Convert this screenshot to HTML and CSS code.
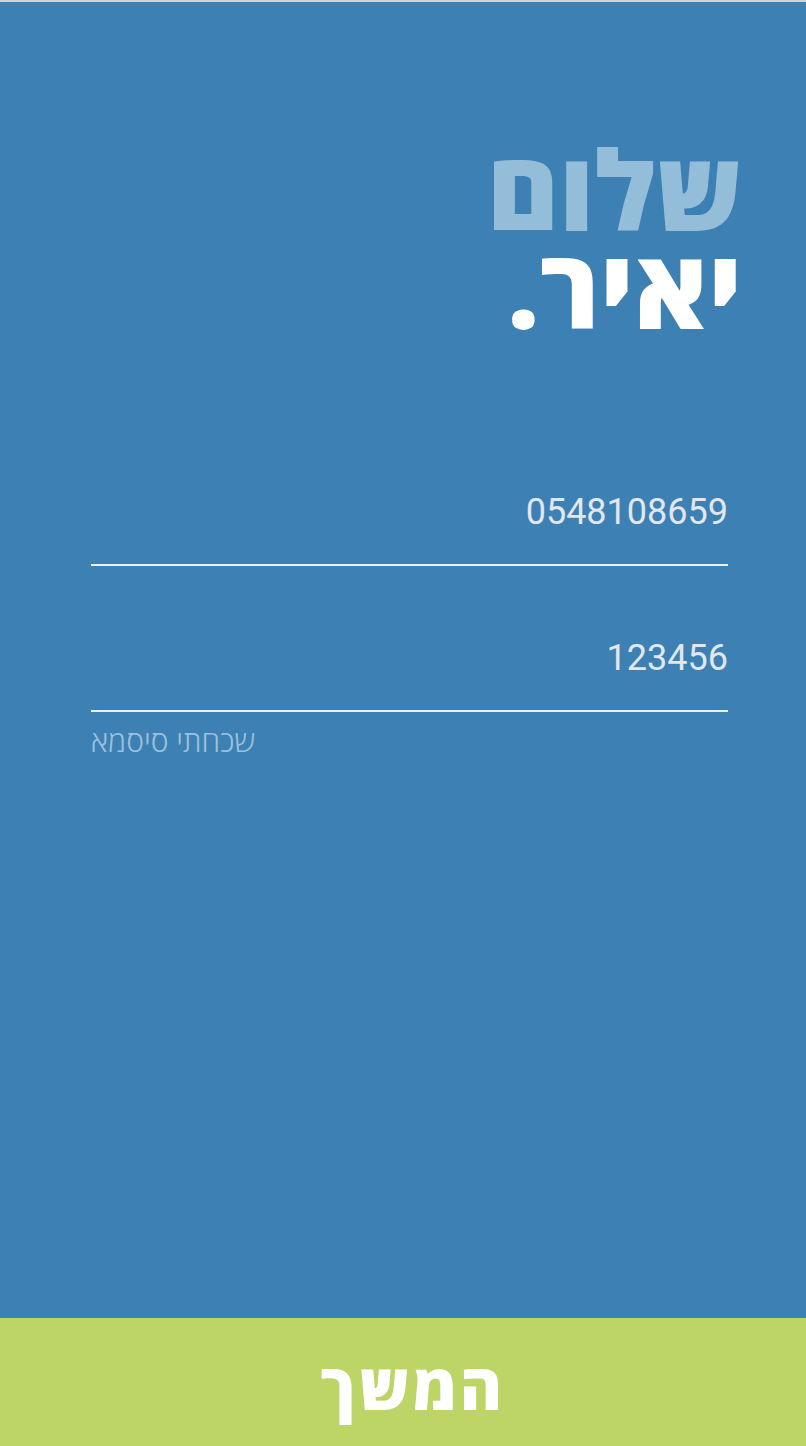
FILE: index.html
```html
<!DOCTYPE html>
<html lang="he" dir="rtl">
<head>
<meta charset="utf-8">
<link rel="stylesheet" href="styles.css">
</head>
<body>
<div class="screen">
  <main class="content">
    <h1 class="greeting">
      <span class="hello">שלום</span>
      <span class="name">יאיר.</span>
    </h1>
    <div class="form">
      <div class="field"><span class="value" dir="ltr">0548108659</span></div>
      <div class="field"><span class="value" dir="ltr">123456</span></div>
      <a class="forgot">שכחתי סיסמא</a>
    </div>
  </main>
  <button class="cta">המשך</button>
</div>
</body>
</html>
```
FILE: styles.css
```css
html, body {
  margin: 0;
  padding: 0;
}
body {
  font-family: "Open Sans", "DejaVu Sans", sans-serif;
}
.screen {
  width: 806px;
  height: 1446px;
  box-sizing: border-box;
  border-top: 2px solid #d2d4d6;
  background: #3d80b3;
  display: flex;
  flex-direction: column;
}
.content {
  flex: 1;
  display: flex;
  flex-direction: column;
}
.greeting {
  margin: 0;
  padding: 137px 64px 0 0;
  display: flex;
  flex-direction: column;
  align-items: flex-start;
  font-family: "Open Sans", sans-serif;
  font-weight: 800;
  font-size: 110px;
  line-height: 98px;
}
.hello {
  color: #94bdd9;
}
.name {
  color: #ffffff;
}
.form {
  padding: 109px 78px 0 91px;
  display: flex;
  flex-direction: column;
}
.field {
  height: 86px;
  border-bottom: 2px solid #eef2f6;
  display: flex;
  align-items: flex-end;
  justify-content: flex-start;
  padding-bottom: 34px;
  margin-bottom: 24px;
}
.value {
  font-family: Roboto, sans-serif;
  font-weight: 400;
  font-size: 36px;
  line-height: 36px;
  color: #e1e7ed;
}
.forgot {
  margin-top: -10px;
  align-self: flex-end;
  font-family: "Open Sans", "DejaVu Sans", sans-serif;
  font-weight: 300;
  font-size: 30px;
  line-height: 30px;
  color: #9cc0dc;
}
.cta {
  height: 128px;
  border: 0;
  margin: 0;
  padding: 8px 0 0 20px;
  background: #bdd466;
  color: #ffffff;
  font-family: "Open Sans", sans-serif;
  font-weight: 800;
  font-size: 64px;
  letter-spacing: 3px;
  line-height: 1;
}
```
